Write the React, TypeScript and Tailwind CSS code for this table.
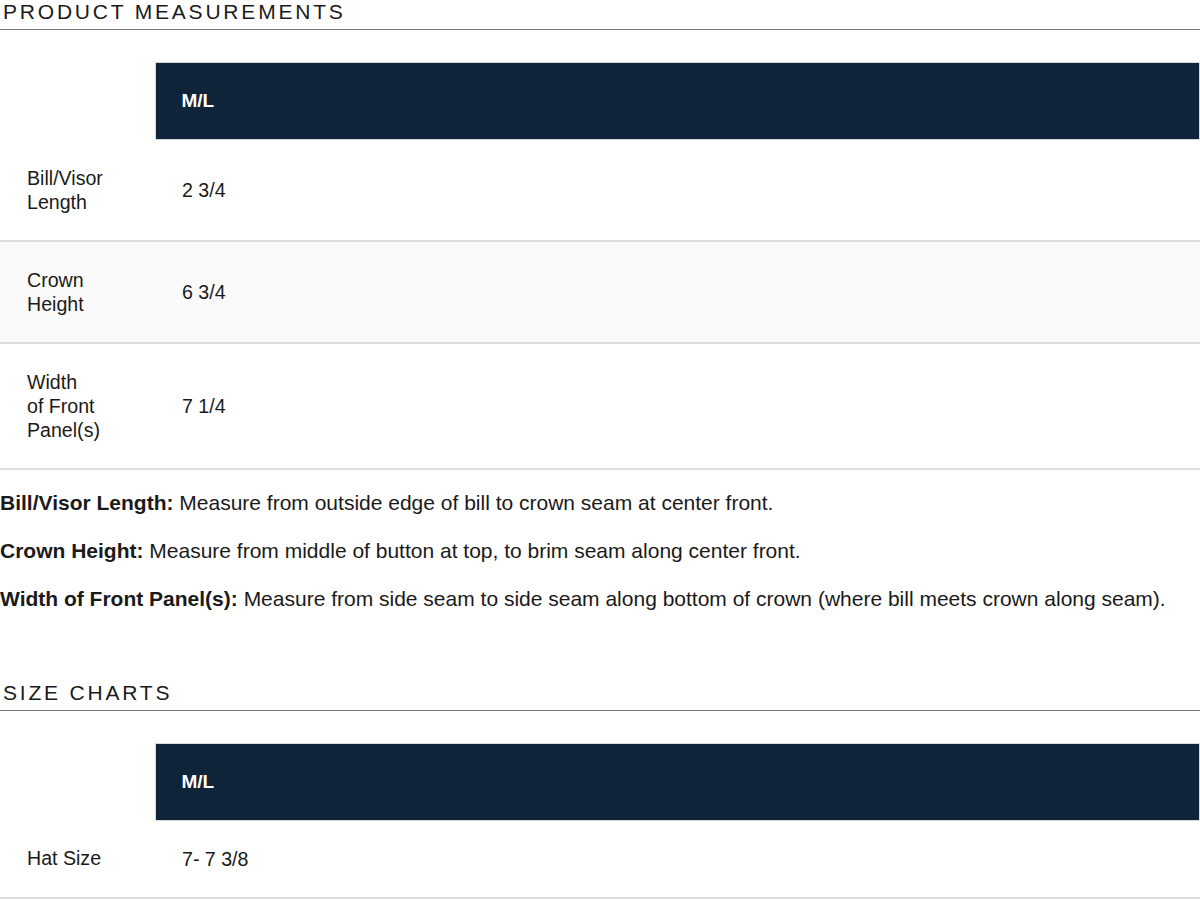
import React from 'react'

type Row = {label: React.ReactNode; value: string; shaded?: boolean}

const measureRows: Row[] = [
  {label: <>Bill/Visor<br />Length</>, value: '2 3/4'},
  {label: <>Crown<br />Height</>, value: '6 3/4', shaded: true},
  {label: <>Width<br />of Front<br />Panel(s)</>, value: '7 1/4'},
]

const sizeRows: Row[] = [{label: 'Hat Size', value: '7- 7 3/8'}]

const notes = [
  {term: 'Bill/Visor Length:', text: 'Measure from outside edge of bill to crown seam at center front.'},
  {term: 'Crown Height:', text: 'Measure from middle of button at top, to brim seam along center front.'},
  {term: 'Width of Front Panel(s):', text: 'Measure from side seam to side seam along bottom of crown (where bill meets crown along seam).'},
]

const SectionTitle = ({children}: {children: React.ReactNode}) => (
  <h2 className="text-[21px] leading-[24px] tracking-[2.8px] uppercase font-normal pl-[3px] pb-[5px] border-b border-[#777]">
    {children}
  </h2>
)

const SizeTable = ({rows}: {rows: Row[]}) => (
  <table className="w-full border-collapse mt-[32px] table-fixed text-[19.6px]">
    <thead>
      <tr>
        <th className="w-[155px] p-0"></th>
        <th className="h-[77px] bg-[#0f2439] border border-[#d6d9dd] text-left text-white font-bold text-[19px] px-[26px] py-0">
          M/L
        </th>
      </tr>
    </thead>
    <tbody>
      {rows.map((r, i) => (
        <tr key={i} className={`border-b-2 border-[#dcdcdc] ${r.shaded ? 'bg-[#fafafa]' : 'bg-white'}`}>
          <td className="px-[27px] py-[26px] align-middle">{r.label}</td>
          <td className="px-[27px] py-[26px] align-middle">{r.value}</td>
        </tr>
      ))}
    </tbody>
  </table>
)

const App = () => {
  return (
    <div className="w-[1200px] bg-white text-[#1a1a1a] text-[19px] leading-[24px] font-['Liberation_Sans',Arial,sans-serif]">
      <SectionTitle>Product Measurements</SectionTitle>
      <SizeTable rows={measureRows} />

      <div className="mt-[21px] flex flex-col gap-[24px] text-[21px]">
        {notes.map(n => (
          <p key={n.term}>
            <span className="font-bold">{n.term}</span> {n.text}
          </p>
        ))}
      </div>

      <div className="mt-[70px]">
        <SectionTitle>Size Charts</SectionTitle>
      </div>
      <SizeTable rows={sizeRows} />
    </div>
  )
}

export default App
